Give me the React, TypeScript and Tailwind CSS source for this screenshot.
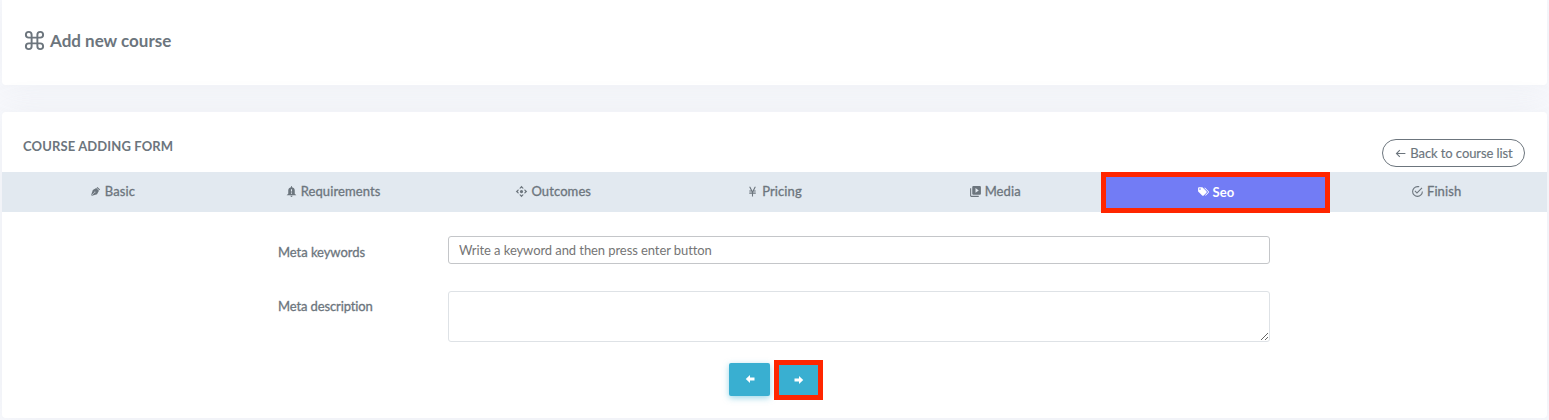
import React from "react";

const paths = {
  command: "M6,2A4,4 0 0,1 10,6V8H14V6A4,4 0 0,1 18,2A4,4 0 0,1 22,6A4,4 0 0,1 18,10H16V14H18A4,4 0 0,1 22,18A4,4 0 0,1 18,22A4,4 0 0,1 14,18V16H10V18A4,4 0 0,1 6,22A4,4 0 0,1 2,18A4,4 0 0,1 6,14H8V10H6A4,4 0 0,1 2,6A4,4 0 0,1 6,2M16,18A2,2 0 0,0 18,20A2,2 0 0,0 20,18A2,2 0 0,0 18,16H16V18M14,10H10V14H14V10M6,16A2,2 0 0,0 4,18A2,2 0 0,0 6,20A2,2 0 0,0 8,18V16H6M8,6A2,2 0 0,0 6,4A2,2 0 0,0 4,6A2,2 0 0,0 6,8H8V6M18,8A2,2 0 0,0 20,6A2,2 0 0,0 18,4A2,2 0 0,0 16,6V8H18Z",
  pen: "M15.54,3.5L20.5,8.47L19.07,9.88L14.12,4.93L15.54,3.5M3.5,19.78L10,13.31C9.9,13 9.97,12.61 10.23,12.35C10.62,11.96 11.26,11.96 11.65,12.35C12.04,12.75 12.04,13.38 11.65,13.77C11.39,14.03 11,14.1 10.69,14L4.22,20.5L14.83,16.95L18.36,10.59L13.42,5.64L7.05,9.17L3.5,19.78Z",
  bell: "M14,20A2,2 0 0,1 12,22A2,2 0 0,1 10,20H14M12,2A1,1 0 0,1 13,3V4.08C15.84,4.56 18,7.03 18,10V16L21,19H3L6,16V10C6,7.03 8.16,4.56 11,4.08V3A1,1 0 0,1 12,2M13,8H11V12H13V8M13,14H11V16H13V14",
  control: "M8,6L12,1.5L16,6L14.5,7L12,5L9.5,7ZM8,18L12,22.5L16,18L14.5,17L12,19L9.5,17ZM6,8L1.5,12L6,16L7,14.5L5,12L7,9.5ZM18,8L22.5,12L18,16L17,14.5L19,12L17,9.5ZM12,9A3,3 0 0,1 12,15A3,3 0 0,1 12,9Z",
  yen: "M11,21V16H6V14H11V13.71L10.16,12H6V10H9.19L5.77,3H8L12,11.18L16,3H18.23L14.81,10H18V12H13.84L13,13.71V14H18V16H13V21H11Z",
  video: "M4,6H2V20A2,2 0 0,0 4,22H18V20H4V6M20,2H8A2,2 0 0,0 6,4V16A2,2 0 0,0 8,18H20A2,2 0 0,0 22,16V4A2,2 0 0,0 20,2M12,14.5V5.5L18,10L12,14.5Z",
  tags: "M5.5,9A1.5,1.5 0 0,0 7,7.5A1.5,1.5 0 0,0 5.5,6A1.5,1.5 0 0,0 4,7.5A1.5,1.5 0 0,0 5.5,9M17.41,11.58C17.77,11.94 18,12.44 18,13C18,13.55 17.78,14.05 17.41,14.41L12.41,19.41C12.05,19.77 11.55,20 11,20C10.45,20 9.95,19.78 9.58,19.41L2.59,12.42C2.22,12.05 2,11.55 2,11V6C2,4.89 2.89,4 4,4H9C9.55,4 10.05,4.22 10.41,4.58L17.41,11.58M13.54,5.71L14.54,4.71L21.41,11.58C21.78,11.94 22,12.45 22,13C22,13.55 21.78,14.05 21.42,14.41L16.04,19.79L15.04,18.79L20.75,13L13.54,5.71Z",
  check: "M20,12A8,8 0 0,1 12,20A8,8 0 0,1 4,12A8,8 0 0,1 12,4C12.76,4 13.5,4.11 14.2,4.31L15.77,2.74C14.61,2.26 13.34,2 12,2A10,10 0 0,0 2,12A10,10 0 0,0 12,22A10,10 0 0,0 22,12H20M7.91,10.08L6.5,11.5L11,16L21,6L19.59,4.58L11,13.17L7.91,10.08Z",
  back: "M21,11V13H7L11.5,17.5L10.08,18.92L3.16,12L10.08,5.08L11.5,6.5L7,11H21Z",
  prev: "M21,9V15H12V20L3.5,12L12,4V9H21Z",
  next: "M3,15V9H12V4L20.5,12L12,20V15H3Z",
};

function Icon({ name, className }: { name: keyof typeof paths; className: string }) {
  return (
    <svg viewBox="0 0 24 24" fill="currentColor" fillRule="evenodd" className={"shrink-0 " + className}>
      <path d={paths[name]} />
    </svg>
  );
}

const tabs: { label: string; icon: keyof typeof paths }[] = [
  { label: "Basic", icon: "pen" },
  { label: "Requirements", icon: "bell" },
  { label: "Outcomes", icon: "control" },
  { label: "Pricing", icon: "yen" },
  { label: "Media", icon: "video" },
  { label: "Seo", icon: "tags" },
  { label: "Finish", icon: "check" },
];

export default function App() {
  return (
    <div className="h-[420px] overflow-hidden bg-[#f8f9fd] px-0.5 font-['Lato',sans-serif] text-[13px] text-[#6c757d] [font-variant-ligatures:none]">
      <header className="flex h-[85px] items-center gap-1 rounded-b bg-white pl-[21px] pb-1 shadow-[0_0_35px_0_rgba(154,161,171,0.12)]">
        <Icon name="command" className="size-[23px]" />
        <h1 className="text-[17px] leading-6 font-bold">Add new course</h1>
      </header>

      <main className="mt-[27px] flex h-[306px] flex-col rounded bg-white shadow-[0_0_35px_0_rgba(154,161,171,0.12)]">
        <div className="flex h-[60px] shrink-0 items-start justify-between pr-[22px] pl-[21px]">
          <h2 className="mt-6 text-[13px] leading-5 font-bold tracking-[0.13px]">COURSE ADDING FORM</h2>
          <button className="mt-[27px] flex h-7 w-[143px] items-center justify-center gap-[3px] rounded-full border border-[#6c757d]">
            <Icon name="back" className="size-[13px]" />
            <span className="pb-px leading-4 tracking-[-0.08px] whitespace-nowrap [-webkit-text-stroke:0.15px]">Back to course list</span>
          </button>
        </div>

        <nav className="grid h-10 shrink-0 grid-cols-7 bg-[#e2e9f0]">
          {tabs.map((t) => (
            <div
              key={t.label}
              className={
                t.label === "Seo"
                  ? "z-10 -mr-1 -mb-px -ml-[5px] flex items-center justify-center gap-[3px] border-5 border-[#ff2600] bg-[#727cf5] pb-0.5 font-bold text-white"
                  : "flex items-center justify-center gap-[3px] pr-px pb-0.5 [-webkit-text-stroke:0.3px]"
              }
            >
              <Icon name={t.icon} className="size-[13px]" />
              <span className="leading-4 tracking-[0.1px]">{t.label}</span>
            </div>
          ))}
        </nav>

        <form className="flex flex-col pl-[276px]">
          <div className="mt-6 flex h-7">
            <label className="mt-2 w-[170px] leading-4 tracking-[-0.05px] [-webkit-text-stroke:0.3px]">Meta keywords</label>
            <input
              className="h-7 w-[822px] rounded-[3px] border border-[#c4c6c9] px-2.5 tracking-[-0.08px] outline-none placeholder:text-[#757575]"
              placeholder="Write a keyword and then press enter button"
            />
          </div>
          <div className="mt-[27px] flex h-[51px]">
            <label className="mt-[7px] w-[170px] leading-4 tracking-[-0.12px] [-webkit-text-stroke:0.3px]">Meta description</label>
            <textarea className="h-[51px] w-[822px] resize-y rounded-[3px] border border-[#dee2e6] outline-none" />
          </div>
        </form>

        <div className="mt-[18px] flex gap-1 pl-[727px]">
          <button className="mt-[3px] flex h-[33px] w-[41px] items-center justify-center rounded-[2px] bg-[#39afd1] pb-px text-white shadow-[0_2px_6px_0_rgba(57,175,209,0.5)]">
            <Icon name="prev" className="size-3" />
          </button>
          <button className="flex h-10 w-[49px] items-center justify-center border-5 border-[#ff2600] bg-[#39afd1] pb-px text-white">
            <Icon name="next" className="size-3" />
          </button>
        </div>
      </main>
    </div>
  );
}
